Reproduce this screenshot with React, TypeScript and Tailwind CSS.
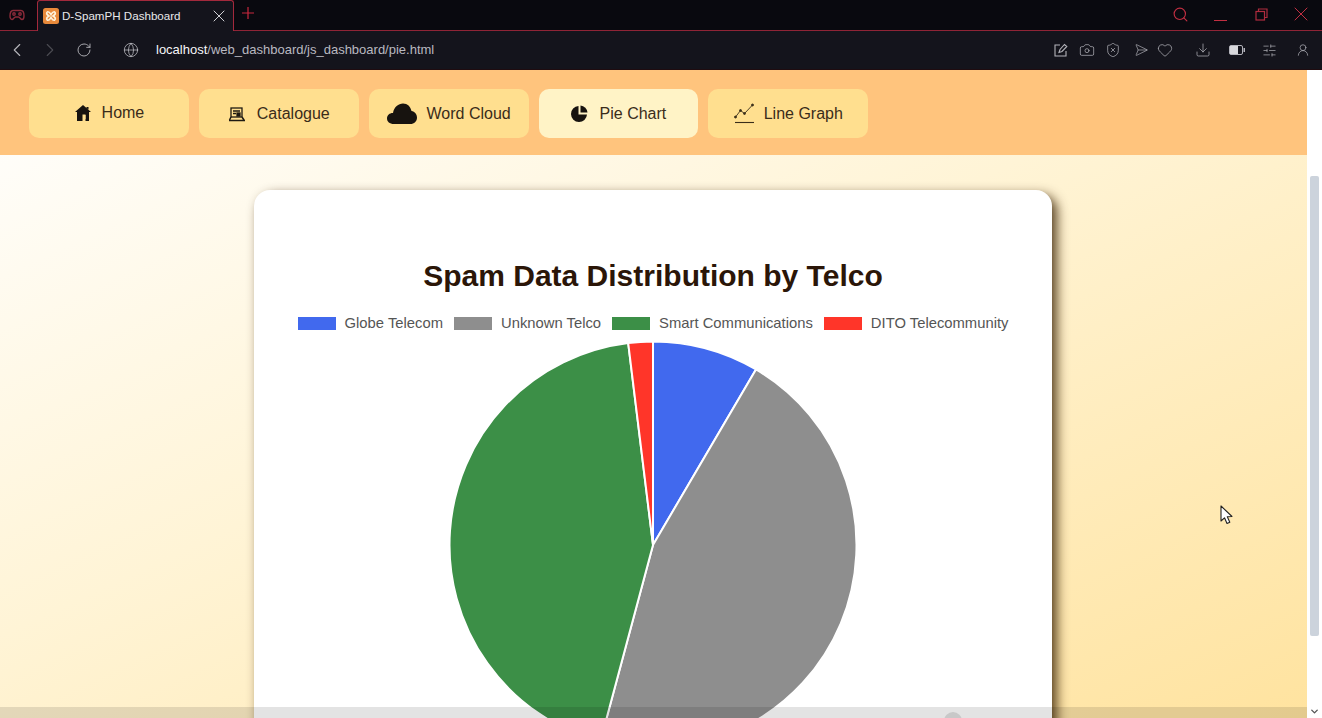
import React from "react";
import { X, ChevronLeft, ChevronRight, RotateCw, Globe, Search, Camera, ShieldX, Send, Heart, Download, SlidersHorizontal, UserRound, ChevronDown } from "lucide-react";

const font = "font-['Liberation_Sans',Arial,sans-serif]";

function polar(deg: number) {
    const r = (deg * Math.PI) / 180;
    return [205 + 203.5 * Math.sin(r), 205 - 203.5 * Math.cos(r)];
}

function slice(from: number, to: number) {
    const [x1, y1] = polar(from);
    const [x2, y2] = polar(to);
    return `M205 205 L${x1} ${y1} A203.5 203.5 0 ${to - from > 180 ? 1 : 0} 1 ${x2} ${y2} Z`;
}

const slices = [
    { from: 0, to: 30.4, color: "#4169ee" },
    { from: 30.4, to: 195, color: "#8e8e8e" },
    { from: 195, to: 353, color: "#3c8f47" },
    { from: 353, to: 360, color: "#ff3529" },
];

const legend = [
    { label: "Globe Telecom", color: "bg-[#4169ee]" },
    { label: "Unknown Telco", color: "bg-[#8e8e8e]" },
    { label: "Smart Communications", color: "bg-[#3c8f47]" },
    { label: "DITO Telecommunity", color: "bg-[#ff3529]" },
];

function HomeIcon() {
    return (
        <svg width="18" height="18" viewBox="0 0 18 18" fill="#17130f">
            <path d="M9 1 L17 8 H15 V17 H11.5 V10.5 H8.5 V17 H3 V8 H1 Z M12.5 3 H14.5 V5.5 L12.5 4 Z" />
            <rect x="9" y="11" width="2.5" height="4" fill="#ffdf8f" />
        </svg>
    );
}

function CatalogueIcon() {
    return (
        <svg width="18" height="16" viewBox="0 0 18 16" fill="none" stroke="#1f1a12" strokeWidth="1.3">
            <rect x="3" y="2" width="11" height="9" />
            <path d="M5 5 H12 M5 7.5 H8" />
            <rect x="9" y="7" width="3" height="3" fill="#1f1a12" />
            <path d="M1 14.5 H17 M3 11 L1.5 14 M14 11 L16 14" strokeWidth="1.5" />
        </svg>
    );
}

function CloudIcon() {
    return (
        <svg width="30" height="21" viewBox="0 0 30 21" fill="#17130f">
            <path d="M7 21 C2.5 21 0 18.5 0 15.5 C0 12 3 9.8 6 10 C7 4 11.5 0.5 16 0.5 C20.5 0.5 23.5 3.5 24.5 8 C27.8 8.5 30 11.5 30 14.5 C30 18.5 27 21 23.5 21 Z" />
        </svg>
    );
}

function PieIcon() {
    return (
        <svg width="17" height="17" viewBox="0 0 17 17" fill="#17130f">
            <path d="M7.5 1 V9.5 H16 A8 8 0 1 1 7.5 1 Z" />
            <path d="M9.5 0.5 A7.5 7.5 0 0 1 16.5 7.5 H9.5 Z" />
        </svg>
    );
}

function LineIcon() {
    return (
        <svg width="21" height="21" viewBox="0 0 21 21" fill="none" stroke="#3a2e1a" strokeWidth="0.9">
            <path d="M1.5 14 L6.5 7.5 L10.5 10.5 L18.5 2" />
            <circle cx="1.5" cy="14" r="1" fill="#3a2e1a" />
            <circle cx="6.5" cy="7.5" r="1" fill="#3a2e1a" />
            <circle cx="10.5" cy="10.5" r="1" fill="#3a2e1a" />
            <circle cx="18.5" cy="2" r="1" fill="#3a2e1a" />
            <path d="M1 19.5 H20" strokeWidth="1.1" />
        </svg>
    );
}

const navItems = [
    { label: "Home", icon: <HomeIcon />, gap: "gap-[10px]", lift: "-mt-[2px]", active: false },
    { label: "Catalogue", icon: <CatalogueIcon />, gap: "gap-[11px]", lift: "", active: false },
    { label: "Word Cloud", icon: <CloudIcon />, gap: "gap-[10px]", lift: "", active: false },
    { label: "Pie Chart", icon: <PieIcon />, gap: "gap-[12px]", lift: "", active: true },
    { label: "Line Graph", icon: <LineIcon />, gap: "gap-[9px]", lift: "", active: false },
];

function TabBar() {
    return (
        <div className="flex h-[31px] shrink-0 items-end border-b border-[#8f2436] bg-[#09090f]">
            <div className="flex h-[30px] w-[37px] items-center justify-center pr-[4px]">
                <svg width="16" height="14" viewBox="0 0 16 14" fill="none" stroke="#8c2b3a" strokeWidth="1.4">
                    <path d="M4 2.5 H12 C14 2.5 15 5 15 8 C15 10.5 14 11.5 13 11.5 C11.5 11.5 11 9 9.5 9 H6.5 C5 9 4.5 11.5 3 11.5 C2 11.5 1 10.5 1 8 C1 5 2 2.5 4 2.5 Z" />
                    <circle cx="5" cy="6" r="1.2" />
                    <circle cx="11" cy="6" r="1.2" />
                </svg>
            </div>
            <div className="-mb-px flex h-[31px] w-[197px] items-center rounded-t-[3px] border border-b-0 border-[#a3293c] bg-[#14141c] pl-[5px] pr-[4px]">
                <svg width="16" height="16" viewBox="0 0 16 16" className="shrink-0">
                    <rect width="16" height="16" rx="2.5" fill="#e98a3b" />
                    <path d="M4 4 C6 3 7 5 8 6.5 C9 5 10 3 12 4 M4 12 C6 13 7 11 8 9.5 C9 11 10 13 12 12 M4 4 C3 6 4 7 6 8 C4 9 3 10 4 12 M12 4 C13 6 12 7 10 8 C12 9 13 10 12 12" fill="none" stroke="#fff3dc" strokeWidth="1.6" />
                </svg>
                <span className={`${font} ml-[3px] flex-1 text-[11.6px] text-[#e8e8ea]`}>D-SpamPH Dashboard</span>
                <X size={20} strokeWidth={1.1} className="text-[#e4e4e8]" />
            </div>
            <div className="flex h-[30px] w-[29px] items-center justify-center pr-[2px] pb-[4px]">
                <svg width="12" height="12" viewBox="0 0 12 12" fill="none" stroke="#c8283e" strokeWidth="1.2">
                    <path d="M6 0 V12 M0 6 H12" />
                </svg>
            </div>
            <div className="ml-auto flex h-[30px] items-center pr-[9px] pb-[2px] text-[#c22f42]">
                <Search size={17} strokeWidth={1.6} />
                <div className="ml-[25px] mt-[12px] h-px w-[13px] bg-[#c22f42]" />
                <svg width="13" height="13" viewBox="0 0 13 13" fill="none" stroke="#b02c3e" strokeWidth="1.2" className="ml-[28px]">
                    <rect x="1" y="3.5" width="8.5" height="8.5" />
                    <path d="M3.5 3.5 V1 H12 V9.5 H9.5" />
                </svg>
                <X size={24} strokeWidth={1} className="ml-[21px]" />
            </div>
        </div>
    );
}

function AddressBar() {
    return (
        <div className="flex h-[39px] shrink-0 items-center border-b border-[#1f0c10] bg-[#14141c] text-[#c4c4ca]">
            <ChevronLeft size={22} strokeWidth={1.2} className="ml-[6px] text-[#b4b4ba]" />
            <ChevronRight size={22} strokeWidth={1.2} className="ml-[11px] text-[#4b4b52]" />
            <RotateCw size={16} strokeWidth={1.4} className="ml-[15px] text-[#b0b0b6]" />
            <Globe size={16} strokeWidth={1.1} className="ml-[31px]" />
            <div className={`${font} ml-[17px] text-[13px] text-[#b9b9c0]`}>
                <span className="text-[#f6f6f8]">localhost</span>/web_dashboard/js_dashboard/pie.html
            </div>
            <div className="ml-auto flex items-center pr-[12px] text-[#b4b4bb]">
                <svg width="14" height="14" viewBox="0 0 14 14" fill="none" stroke="currentColor" strokeWidth="1.1">
                    <path d="M6 2 H1 V13 H12 V8 M5 9.5 L6 6.5 L10.5 1.5 L12.8 3.5 L8 8.5 Z" />
                </svg>
                <Camera size={16} strokeWidth={1.1} className="ml-[11px]" />
                <ShieldX size={16} strokeWidth={1.1} className="ml-[10px]" />
                <Send size={14} strokeWidth={1.1} className="ml-[11px] rotate-45" />
                <Heart size={16} strokeWidth={1.1} className="ml-[11px]" />
                <Download size={16} strokeWidth={1.1} className="ml-[22px]" />
                <svg width="16" height="10" viewBox="0 0 16 10" className="ml-[18px]">
                    <rect x="0.5" y="0.5" width="13" height="9" rx="1.5" fill="none" stroke="currentColor" />
                    <rect x="1" y="1" width="8" height="8" fill="#d8d8dc" />
                    <rect x="14.5" y="3" width="1.5" height="4" fill="currentColor" />
                </svg>
                <SlidersHorizontal size={15} strokeWidth={1.1} className="ml-[17px]" />
                <UserRound size={14} strokeWidth={1.2} className="ml-[19px]" />
            </div>
        </div>
    );
}

function NavButtons() {
    return (
        <div className="flex h-[85px] shrink-0 items-start gap-[10px] bg-[#ffc47d] pt-[19px] pl-[29px]">
            {navItems.map((item) => (
                <div
                    key={item.label}
                    className={`flex h-[49px] w-[159.85px] items-center justify-center rounded-[10px] ${item.gap} ${item.active ? "bg-[#fff3c6]" : "bg-[#ffdf8f]"}`}
                >
                    <span className={item.lift}>{item.icon}</span>
                    <span className={`${font} text-[16px] text-[#3a2c1a] ${item.lift}`}>{item.label}</span>
                </div>
            ))}
        </div>
    );
}

function ChartCard() {
    return (
        <div className="mt-[35px] ml-[254px] h-[700px] w-[798px] rounded-[16px] bg-white pt-[67px] shadow-[5px_5px_12px_rgba(60,35,5,0.85)]">
            <h1 className={`${font} text-center text-[30px] leading-[38px] font-bold text-[#2b1608]`}>
                Spam Data Distribution by Telco
            </h1>
            <div className="mt-[20px] flex h-[16px] items-center justify-center gap-[11px]">
                {legend.map((l) => (
                    <div key={l.label} className="flex items-center gap-[9px]">
                        <div className={`h-[13px] w-[38px] ${l.color}`} />
                        <span className={`${font} text-[14.8px] text-[#555555]`}>{l.label}</span>
                    </div>
                ))}
            </div>
            <svg width="410" height="410" viewBox="0 0 410 410" className="mx-auto mt-[9px]">
                {slices.map((s) => (
                    <path key={s.color} d={slice(s.from, s.to)} fill={s.color} stroke="#fff" strokeWidth="2" />
                ))}
            </svg>
        </div>
    );
}

export default function App() {
    return (
        <div className="flex h-[718px] w-[1322px] flex-col overflow-hidden bg-white">
            <TabBar />
            <AddressBar />
            <div className="relative flex min-h-0 flex-1">
                <div className="flex w-[1307px] flex-col overflow-hidden bg-[linear-gradient(155deg,#ffffff_0%,#fff4d6_45%,#ffe39f_100%)]">
                    <NavButtons />
                    <ChartCard />
                </div>
                <div className="flex w-[15px] flex-col items-center bg-white">
                    <div className="mt-[106px] h-[460px] w-[9px] rounded-[2px] bg-[#ccd3dc]" />
                    <ChevronDown size={11} strokeWidth={3} className="mt-auto mb-[1px] text-[#555]" />
                </div>
                {/* strip of the status overlay at the bottom of the page */}
                <div className="absolute bottom-0 left-0 h-[11px] w-[1307px] overflow-hidden bg-[rgba(0,0,0,0.11)]">
                    <div className="absolute left-[944px] top-[5px] h-[18px] w-[18px] rounded-full bg-[#c8c8c8]" />
                </div>
                <svg width="14" height="20" viewBox="0 0 14 20" className="absolute left-[1220px] top-[435px]">
                    <path d="M1 1 V16 L4.5 12.8 L7 18.5 L9.8 17.2 L7.3 11.8 L12 11.5 Z" fill="#fff" stroke="#222" strokeWidth="1.1" strokeLinejoin="round" />
                </svg>
            </div>
        </div>
    );
}
